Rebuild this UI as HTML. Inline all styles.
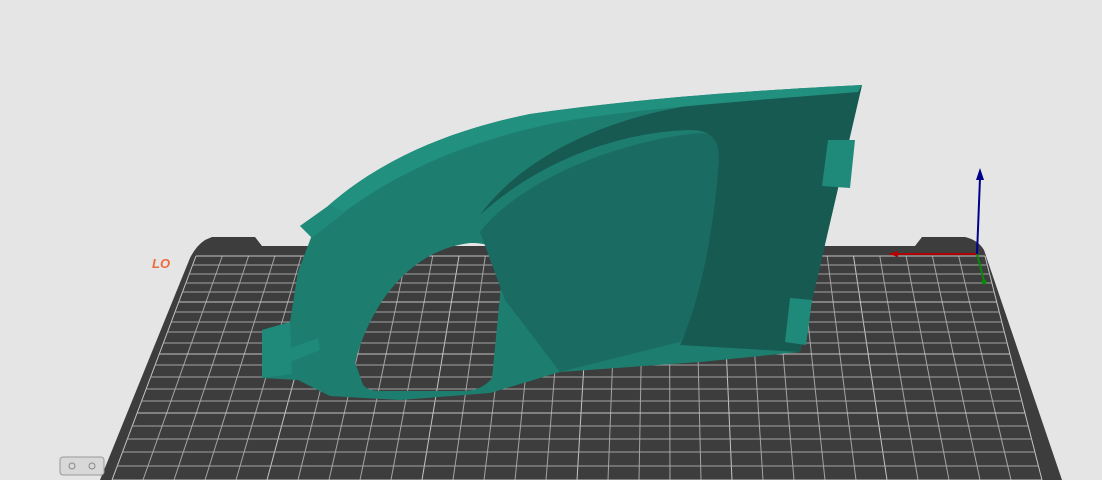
<!DOCTYPE html>
<html><head><meta charset="utf-8"><style>
html,body{margin:0;padding:0;background:#e5e5e5;width:1102px;height:480px;overflow:hidden}
svg{display:block}
</style></head><body>
<svg width="1102" height="480" viewBox="0 0 1102 480" xmlns="http://www.w3.org/2000/svg">
<rect width="1102" height="480" fill="#e5e5e5"/>
<path d="M100,480 L190,258 Q196,246 205,240 L212,237 L255,237 L262,246 L915,246 L922,237 L965,237 Q978,240 984,250 L1062,480 Z" fill="#3c3d3c"/>
<g id="grid" stroke="#a4a4a4" stroke-width="1"></g>
<text x="152" y="268" font-family="Liberation Sans,sans-serif" font-weight="bold" font-style="italic" font-size="13" fill="#ee6a3c">LO</text>
<!-- model -->
<path fill-rule="evenodd" fill="#1d7e70" d="M862,85 L800,352 L700,362 L560,372 L490,393 L400,400 L330,396 L298,380 L262,378 L262,330 L290,322 L298,272 L312,235 L300,226 L328,206 C380,160 450,130 530,114 C640,98 760,90 862,85 Z M362,382 L355,362 C372,300 412,250 470,243 C496,242 506,255 502,275 L492,378 Q482,391 462,391 L382,391 Q364,391 362,382 Z"/>
<path fill="#1a6c62" d="M480,232 C520,180 620,140 700,133 C722,133 722,150 718,170 C710,250 700,310 680,342 L560,372 L505,300 Z"/>
<path fill="#175a52" d="M862,85 L800,352 L680,345 C700,300 712,240 718,170 C722,140 712,130 690,130 C620,132 540,160 480,215 C520,160 600,118 700,104 L862,85 Z"/>
<path fill="#21907f" d="M328,206 C380,160 450,130 530,114 C640,98 760,90 862,85 L858,92 C760,100 640,108 560,122 C470,140 400,170 340,215 Z"/>
<path fill="#1f8a7a" d="M300,226 L330,205 L345,212 L312,238 Z M262,330 L290,322 L292,374 L262,378 Z M285,350 L318,338 L320,350 L290,362 Z M828,140 L855,140 L850,188 L822,186 Z M790,298 L812,300 L806,345 L785,342 Z"/>
<!-- axes -->
<line x1="977" y1="254" x2="892" y2="254" stroke="#b00000" stroke-width="2"/>
<polygon points="888,254 898,251 898,257" fill="#b00000"/>
<line x1="977" y1="254" x2="980" y2="178" stroke="#00008b" stroke-width="2"/>
<polygon points="980,168 976,180 984,180" fill="#00008b"/>
<line x1="977" y1="254" x2="984" y2="281" stroke="#0a8a0a" stroke-width="2"/>
<circle cx="984" cy="282" r="2.5" fill="#0a8a0a"/>
<rect x="60" y="457" width="44" height="18" rx="3" fill="#d8d8d8" stroke="#999"/>
<circle cx="72" cy="466" r="3" fill="none" stroke="#888"/><circle cx="92" cy="466" r="3" fill="none" stroke="#888"/>
</svg>
<script>
var g=document.getElementById('grid'),ns='http://www.w3.org/2000/svg';
function L(a,b,c,d,w){var l=document.createElementNS(ns,'line');l.setAttribute('x1',a);l.setAttribute('y1',b);l.setAttribute('x2',c);l.setAttribute('y2',d);if(w)l.setAttribute('stroke','#c4c4c4');g.appendChild(l);}
var yt=256,yb=480,xl0=196,xr0=985,xl1=112,xr1=1042;
for(var i=0;i<=30;i++){var t=i/30;L(xl0+(xr0-xl0)*t,yt,xl1+(xr1-xl1)*t,yb,i%5==0);}
var ys=[256,265,274,283,292,302,312,322,332,343,354,365,377,389,401,413,426,439,452,466,480];
ys.forEach(function(y,i){var f=(y-yt)/(yb-yt);L(xl0+(xl1-xl0)*f,y,xr0+(xr1-xr0)*f,y,i%5==0);});
</script>
</body></html>
